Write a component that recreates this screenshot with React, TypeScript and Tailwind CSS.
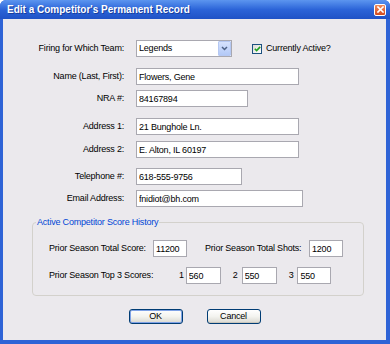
import type { ReactNode } from "react";

const input = "h-[17px] border border-[#a9a8b0] bg-white pl-[2px] text-black outline-none";

function Row({ label, className, children }: { label: string; className: string; children: ReactNode }) {
  return (
    <div className={`flex h-[17px] items-center ${className}`}>
      <span className="w-[121px] text-right">{label}</span>
      <div className="ml-[12px] flex items-center">{children}</div>
    </div>
  );
}

function Btn({ label, primary }: { label: string; primary?: boolean }) {
  return (
    <button
      className={`h-[15px] w-[54px] rounded-[3px] border border-[#003c74] bg-linear-to-b from-white via-[#f3f3ef] to-[#d9d8d0] leading-none text-black ${
        primary ? "shadow-[inset_0_0_0_1px_#7fa2e6]" : "shadow-[inset_0_-1px_0_0_#c8c6bc]"
      }`}
    >
      {label}
    </button>
  );
}

export default function App() {
  return (
    <div className="flex h-[344px] w-[390px] flex-col overflow-hidden rounded-t-[6px] bg-[#2a5fd4] font-['Liberation_Sans',Arial,sans-serif] text-[9px] tracking-[-0.2px] text-black">
      {/* title bar */}
      <div className="flex h-[19px] shrink-0 items-center justify-between bg-linear-to-b from-[#5c95ef] via-[#2c64d8] to-[#1f52c6] pl-[7px] pr-[4px]">
        <span className="text-[10px] font-bold tracking-normal text-white [text-shadow:1px_1px_0_#173e9e]">
          Edit a Competitor's Permanent Record
        </span>
        <div className="flex h-[12px] w-[12px] items-center justify-center rounded-[2px] border border-white bg-linear-to-b from-[#f08a5c] to-[#d24a1c]">
          <svg width="7" height="7" viewBox="0 0 7 7">
            <path d="M1 1L6 6M6 1L1 6" stroke="white" strokeWidth="1.6" strokeLinecap="square" />
          </svg>
        </div>
      </div>

      {/* body */}
      <div className="flex flex-1 flex-col border-b-[4px] border-l-[3px] border-r-[4px] border-[#2e63d6] bg-[#ebe9ed]">
        <Row label="Firing for Which Team:" className="mt-[21px]">
          <div className="flex h-[17px] w-[96px] items-center justify-between border border-[#a9a8b0] bg-white pl-[2px]">
            <span>Legends</span>
            <div className="flex h-[15px] w-[13px] items-center justify-center rounded-[1px] border border-[#b5c8f3] bg-linear-to-b from-[#d6e2fd] to-[#b3c9f7]">
              <svg width="7" height="5" viewBox="0 0 7 5">
                <path d="M1 1L3.5 3.5L6 1" fill="none" stroke="#4d6185" strokeWidth="1.5" />
              </svg>
            </div>
          </div>
          <div className="ml-[20px] flex items-center">
            <div className="flex h-[10px] w-[10px] items-center justify-center border border-[#1c5180] bg-linear-to-br from-[#dcdcd6] to-white">
              <svg width="7" height="6" viewBox="0 0 7 6">
                <path d="M0.8 2.8L2.6 4.6L6.2 0.9" fill="none" stroke="#21a121" strokeWidth="1.6" />
              </svg>
            </div>
            <span className="ml-[4px]">Currently Active?</span>
          </div>
        </Row>

        <Row label="Name (Last, First):" className="mt-[11px]">
          <input className={`${input} w-[163px]`} defaultValue="Flowers, Gene" />
        </Row>
        <Row label="NRA #:" className="mt-[5px]">
          <input className={`${input} w-[112px]`} defaultValue="84167894" />
        </Row>
        <Row label="Address 1:" className="mt-[11px]">
          <input className={`${input} w-[163px]`} defaultValue="21 Bunghole Ln." />
        </Row>
        <Row label="Address 2:" className="mt-[6px]">
          <input className={`${input} w-[163px]`} defaultValue="E. Alton, IL 60197" />
        </Row>
        <Row label="Telephone #:" className="mt-[10px]">
          <input className={`${input} w-[106px]`} defaultValue="618-555-9756" />
        </Row>
        <Row label="Email Address:" className="mt-[5px]">
          <input className={`${input} w-[167px]`} defaultValue="fnidiot@bh.com" />
        </Row>

        {/* score history group */}
        <fieldset className="mt-[10px] ml-[29px] w-[332px] rounded-[4px] border border-[#d3d1cc] pb-[11px]">
          <legend className="ml-[3px] px-[1px] leading-[11px] text-[#0046d5]">Active Competitor Score History</legend>
          <div className="mt-[12px] flex h-[17px] items-center pl-[16px]">
            <span className="w-[104px]">Prior Season Total Score:</span>
            <input className={`${input} w-[34px]`} defaultValue="11200" />
            <span className="ml-[18px] w-[104px]">Prior Season Total Shots:</span>
            <input className={`${input} w-[34px]`} defaultValue="1200" />
          </div>
          <div className="mt-[10px] flex h-[17px] items-center pl-[16px]">
            <span className="w-[130px]">Prior Season Top 3 Scores:</span>
            <span>1</span>
            <input className={`${input} ml-[2px] w-[35px]`} defaultValue="560" />
            <span className="ml-[12px]">2</span>
            <input className={`${input} ml-[4px] w-[35px]`} defaultValue="550" />
            <span className="ml-[12px]">3</span>
            <input className={`${input} ml-[4px] w-[34px]`} defaultValue="550" />
          </div>
        </fieldset>

        <div className="mt-[13px] flex justify-center gap-[24px]">
          <Btn label="OK" primary />
          <Btn label="Cancel" />
        </div>
      </div>
    </div>
  );
}
